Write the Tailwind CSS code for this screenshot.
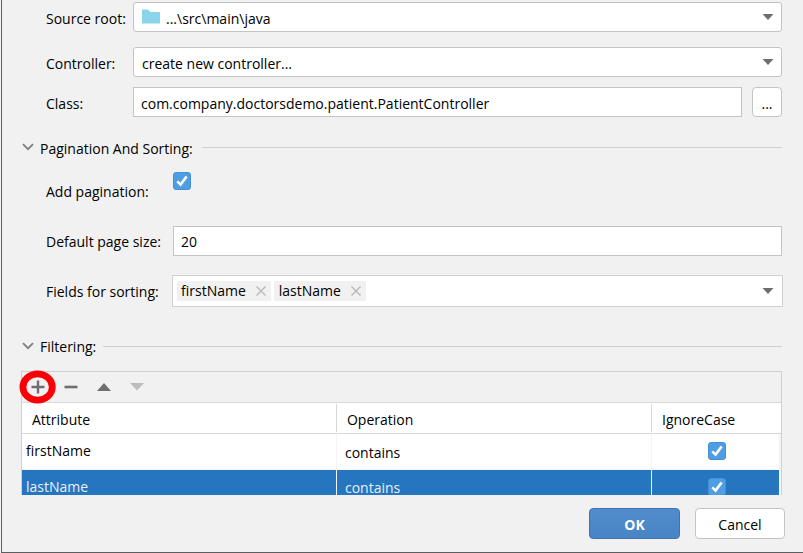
<!DOCTYPE html>
<html lang="en">
<head>
<meta charset="utf-8">
<title>Controller settings</title>
<script src="https://cdn.jsdelivr.net/npm/@tailwindcss/browser@4"></script>
</head>
<body class="bg-[#f4f4f8] font-['Open_Sans','Noto_Sans',sans-serif] text-sm leading-5 text-black">
<svg class="hidden">
  <symbol id="tri" viewBox="0 0 12 6"><path d="M0.5 0H11.5L6 6Z" fill="currentColor"/></symbol>
  <symbol id="chev" viewBox="0 0 12 8"><path d="M1 1.2L6 6.2L11 1.2" fill="none" stroke="#7f7f7f" stroke-width="1.8"/></symbol>
  <symbol id="x" viewBox="0 0 10 10"><path d="M0.5 0.5L9.5 9.5M9.5 0.5L0.5 9.5" fill="none" stroke="#b4b8bb" stroke-width="1.4"/></symbol>
  <symbol id="tick" viewBox="0 0 18 18"><path d="M4.2 9.4L7.6 12.6L13.6 4.4" fill="none" stroke="#fff" stroke-width="2.6"/></symbol>
</svg>
<main class="ml-px flex h-screen flex-col border-b border-l border-[#5c5e60] bg-[#f1f1f1] pt-[2px] pr-[21px] pl-5">
  <form class="flex min-h-0 flex-1 flex-col">
    <div class="flex items-center pl-6">
      <label for="root" class="w-[87px] pt-1">Source root:</label>
      <div class="relative flex-1">
        <select id="root" class="block h-[30px] w-full appearance-none rounded-[3px] border border-[#c4c4c4] bg-white pt-1 pl-8"><option>...\src\main\java</option></select>
        <svg class="pointer-events-none absolute top-[7px] left-[9px] h-[15px] w-[18px]" viewBox="0 0 18 15"><path d="M0 0.5H6L8.5 3H18V14.5H0Z" fill="#8cd3ec"/></svg>
        <svg class="pointer-events-none absolute top-3 right-2 h-[6px] w-3 text-[#6e6e6e]"><use href="#tri"/></svg>
      </div>
    </div>
    <div class="mt-[15px] flex items-center pl-6">
      <label for="controller" class="w-[87px] pt-1">Controller:</label>
      <div class="relative flex-1">
        <select id="controller" class="block h-[30px] w-full appearance-none rounded-[3px] border border-[#c4c4c4] bg-white pt-1 pl-2"><option>create new controller...</option></select>
        <svg class="pointer-events-none absolute top-3 right-2 h-[6px] w-3 text-[#6e6e6e]"><use href="#tri"/></svg>
      </div>
    </div>
    <div class="mt-[10px] flex items-center pl-6">
      <label for="class" class="w-[87px] pt-1">Class:</label>
      <input id="class" class="h-[30px] min-w-0 flex-1 border border-[#c4c4c4] bg-white pt-[2px] pl-[7px]" value="com.company.doctorsdemo.patient.PatientController">
      <button type="button" aria-label="Browse" class="ml-[10px] h-[30px] w-[30px] rounded-[4px] border border-[#c4c4c4] bg-white pt-1">...</button>
    </div>

    <div class="mt-[20px] flex h-5 items-center">
      <svg class="mr-[6px] h-2 w-3"><use href="#chev"/></svg>
      <h2 class="pt-1">Pagination And Sorting:</h2>
      <div class="ml-[9px] h-px flex-1 bg-[#d0d0d0]"></div>
    </div>
    <div class="mt-[15px] flex h-[30px] pl-6">
      <label for="pag" class="w-[127px] self-end">Add pagination:</label>
      <span class="relative h-[18px] w-[18px]">
        <input id="pag" type="checkbox" checked class="block h-[18px] w-[18px] appearance-none rounded-[3px] border border-[#448fd6] bg-[#4f9ee3]">
        <svg class="pointer-events-none absolute inset-0 h-[18px] w-[18px]"><use href="#tick"/></svg>
      </span>
    </div>
    <div class="mt-6 flex items-center pl-6">
      <label for="size" class="w-[127px] pt-[2px]">Default page size:</label>
      <input id="size" class="h-[30px] min-w-0 flex-1 border border-[#c4c4c4] bg-white pl-[7px]" value="20">
    </div>
    <div class="mt-[19px] -mr-px flex items-center pl-6">
      <span class="w-[126px] pt-[2px]">Fields for sorting:</span>
      <div class="relative flex h-8 flex-1 items-center gap-[3px] border border-[#d0d0d0] bg-white pb-px pl-1">
        <span class="flex h-5 items-center bg-[#f1f1f1] pr-[5px] pl-1 leading-5">firstName<button type="button" aria-label="Remove firstName" class="ml-[10px]"><svg class="h-[10px] w-[10px]"><use href="#x"/></svg></button></span>
        <span class="flex h-5 items-center bg-[#f1f1f1] pr-[5px] pl-[5px] leading-5">lastName<button type="button" aria-label="Remove lastName" class="ml-[10px]"><svg class="h-[10px] w-[10px]"><use href="#x"/></svg></button></span>
        <button type="button" aria-label="Show fields" class="mr-2 ml-auto pt-px"><svg class="h-[6px] w-3 text-[#6e6e6e]"><use href="#tri"/></svg></button>
      </div>
    </div>

    <div class="mt-[29px] flex h-5 items-center">
      <svg class="mr-[6px] h-2 w-3"><use href="#chev"/></svg>
      <h2 class="pt-[2px]">Filtering:</h2>
      <div class="ml-[7px] h-px flex-1 bg-[#d0d0d0]"></div>
    </div>
    <section class="mt-[15px] -ml-px flex min-h-0 flex-1 flex-col border-x border-t border-[#d0d0d0]">
      <div class="relative flex h-[30px] shrink-0 items-center gap-[19px] pl-[9px] text-[#6e6e6e]">
        <button type="button" aria-label="Add"><svg class="h-[14px] w-[14px]" viewBox="0 0 14 14"><path d="M7 0.5V13.5M0.5 7H13.5" stroke="currentColor" stroke-width="2.4"/></svg></button>
        <button type="button" aria-label="Remove"><svg class="h-[14px] w-[14px]" viewBox="0 0 14 14"><path d="M0.5 7H13.5" stroke="currentColor" stroke-width="2.6"/></svg></button>
        <button type="button" aria-label="Move up"><svg class="h-[14px] w-[14px]" viewBox="0 0 14 14"><path d="M0 11H14L7 3Z" fill="currentColor"/></svg></button>
        <button type="button" aria-label="Move down" class="text-[#bcbcbc]"><svg class="h-[14px] w-[14px]" viewBox="0 0 14 14"><path d="M0 3H14L7 10.5Z" fill="currentColor"/></svg></button>
        <svg class="pointer-events-none absolute -top-[2px] -left-[3px] h-[34px] w-[38px]" viewBox="0 0 38 34"><ellipse cx="18.6" cy="17" rx="14.7" ry="13.2" fill="none" stroke="#fb0007" stroke-width="6.8"/></svg>
      </div>
      <div class="min-h-0 flex-1 overflow-hidden">
        <table class="w-full table-fixed border-separate border-spacing-0 text-left">
          <thead>
            <tr class="h-8 bg-white">
              <th class="w-[41.5%] border-y border-[#d8d8d8] py-0 pr-0 pl-[10px] font-normal">
                <div class="flex justify-between"><span class="pt-[6px]">Attribute</span><span class="h-7 w-px bg-[#d8d8d8]"></span></div></th>
              <th class="w-[41.5%] border-y border-[#d8d8d8] py-0 pr-0 pl-[10px] font-normal">
                <div class="flex justify-between"><span class="pt-[6px]">Operation</span><span class="h-7 w-px bg-[#d8d8d8]"></span></div></th>
              <th class="border-y border-[#d8d8d8] py-0 pr-0 pl-[10px] font-normal">
                <div class="flex h-7"><span class="pt-[6px]">IgnoreCase</span></div></th>
            </tr>
          </thead>
          <tbody>
            <tr class="h-9 bg-white">
              <td class="border-r border-b border-[#f4f4f4] p-0 pb-px pl-1">firstName</td>
              <td class="border-r border-b border-[#f4f4f4] p-0 pt-[3px] pl-2">contains</td>
              <td class="border-r-2 border-b border-[#f4f4f4] p-0 pb-[2px] pl-1">
                <div class="relative mx-auto h-[18px] w-[18px]">
                  <input type="checkbox" checked aria-label="Ignore case for firstName" class="block h-[18px] w-[18px] appearance-none rounded-[3px] border border-[#448fd6] bg-[#4f9ee3]">
                  <svg class="pointer-events-none absolute inset-0 h-[18px] w-[18px]"><use href="#tick"/></svg>
                </div></td>
            </tr>
            <tr class="h-9 bg-[#2675bf] text-[#e6f0f8]">
              <td class="border-r border-b border-[#f4f4f4] p-0 pb-[2px] pl-1">lastName</td>
              <td class="border-r border-b border-[#f4f4f4] p-0 pt-px pl-2">contains</td>
              <td class="border-r-2 border-b border-[#f4f4f4] p-0 pb-[2px] pl-1">
                <div class="relative mx-auto h-[18px] w-[18px]">
                  <input type="checkbox" checked aria-label="Ignore case for lastName" class="block h-[18px] w-[18px] appearance-none rounded-[3px] border border-[#448fd6] bg-[#4f9ee3]">
                  <svg class="pointer-events-none absolute inset-0 h-[18px] w-[18px]"><use href="#tick"/></svg>
                </div></td>
            </tr>
          </tbody>
        </table>
      </div>
    </section>
    <footer class="-mr-[3px] flex h-[57px] shrink-0 justify-end gap-[15px] pt-[13px]">
      <button type="submit" class="h-[31px] w-[91px] rounded-[4px] border border-[#3f74b2] bg-linear-to-b from-[#528ccb] to-[#4884c6] pt-[2px] font-bold text-white">OK</button>
      <button type="button" class="h-[31px] w-[90px] rounded-[4px] border border-[#c4c4c4] bg-white pt-[2px]">Cancel</button>
    </footer>
  </form>
</main>
</body>
</html>
